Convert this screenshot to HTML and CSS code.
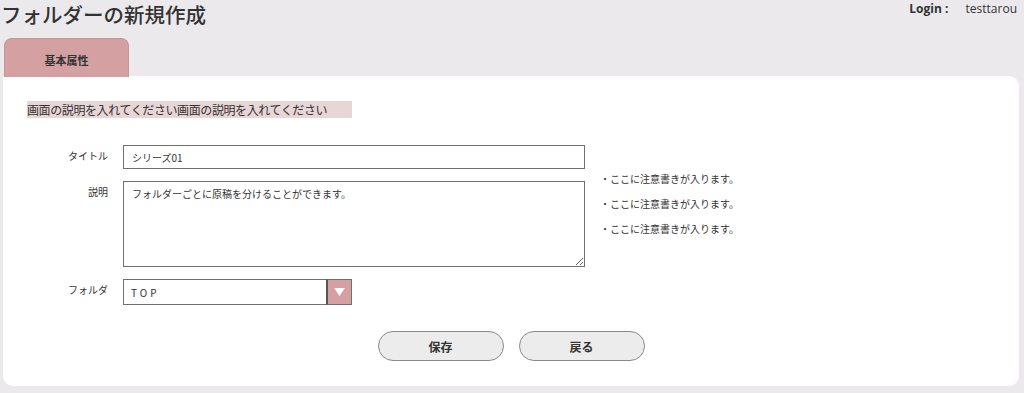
FILE: index.html
```html
<!DOCTYPE html>
<html lang="ja">
<head>
    <meta charset="UTF-8">
    <meta name="viewport" content="width=device-width, initial-scale=1.0">
    <title>フォルダーの新規作成</title>
    <link rel="stylesheet" href="styles.css">
</head>
<body>
    <div class="page-header">
        <h1 class="page-title">フォルダーの新規作成</h1>
        <div class="login-info">
            <span class="login-label">Login :</span>
            <span class="login-user">testtarou</span>
        </div>
    </div>
    <div class="tabs">
        <div class="tab active">基本属性</div>
    </div>
    <div class="panel">
        <p class="page-desc">画面の説明を入れてください画面の説明を入れてください</p>
        <div class="form-grid">
            <label class="form-label" for="title">タイトル</label>
            <input class="form-input" id="title" type="text" value="シリーズ01">
            <div></div>

            <label class="form-label" for="desc">説明</label>
            <textarea class="form-textarea" id="desc">フォルダーごとに原稿を分けることができます。</textarea>
            <ul class="notes">
                <li>・ここに注意書きが入ります。</li>
                <li>・ここに注意書きが入ります。</li>
                <li>・ここに注意書きが入ります。</li>
            </ul>

            <label class="form-label" for="folder">フォルダ</label>
            <div class="select-wrap">
                <select class="form-select" id="folder">
                    <option>TOP</option>
                </select>
                <span class="select-arrow">
                    <svg viewBox="0 0 12 10"><path d="M0 0h12L6 9z" fill="#fff"/></svg>
                </span>
            </div>
            <div></div>
        </div>
        <div class="actions">
            <button class="btn" type="button">保存</button>
            <button class="btn" type="button">戻る</button>
        </div>
    </div>
</body>
</html>
```

FILE: styles.css
```css
* { margin: 0; padding: 0; box-sizing: border-box; }
body {
    font-family: "Noto Sans CJK JP", "Noto Sans", sans-serif;
    background: #ebe9ec;
    color: #333;
    height: 393px;
    overflow: hidden;
}
.page-header {
    display: flex;
    justify-content: space-between;
    align-items: flex-start;
    height: 38px;
}
.page-title {
    font-size: 20.5px;
    font-weight: 500;
    line-height: 28px;
    color: #333;
    padding-left: 1px;
}
.login-info {
    font-family: "Open Sans", "Noto Sans CJK JP", sans-serif;
    font-size: 12px;
    line-height: 18px;
    padding: 0 7px 0 0;
    color: #333;
}
.login-label { font-weight: 700; margin-right: 14px; }
.tabs { display: flex; padding-left: 4px; height: 38px; }
.tab {
    width: 125px;
    height: 39px;
    background: #d4a0a2;
    border: 1px solid #c69597;
    border-bottom: none;
    border-radius: 8px 8px 0 0;
    font-size: 11px;
    font-weight: 700;
    display: flex;
    align-items: center;
    justify-content: center;
    padding-top: 4px;
    color: #333;
}
.panel {
    background: #fff;
    margin: 0 5px 0 3px;
    height: 310px;
    border-radius: 0 10px 10px 10px;
    padding: 25px 0 0 0;
}
.page-desc {
    margin-left: 24px;
    width: 325px;
    height: 17px;
    background: #e8d5d6;
    font-size: 12px;
    line-height: 17px;
    letter-spacing: -0.4px;
    color: #333;
}
.form-grid {
    display: grid;
    grid-template-columns: 105px 462px 1fr;
    column-gap: 15px;
    row-gap: 12px;
    margin-top: 27px;
    align-items: start;
}
.form-label {
    text-align: right;
    font-size: 10px;
    line-height: 14px;
    padding-top: 4px;
    color: #333;
}
.form-input, .form-textarea, .form-select {
    font-family: "Noto Sans CJK JP", "Noto Sans", sans-serif;
    font-size: 10px;
    color: #333;
    border: 1px solid #707070;
    background: #fff;
    outline: none;
    width: 100%;
    display: block;
}
.form-input { height: 24px; padding: 0 8px; }
.form-textarea { height: 86px; padding: 4px 8px; resize: vertical; line-height: 16px; }
.notes {
    list-style: none;
    font-size: 10px;
    line-height: 16px;
    margin-top: -10px;
    display: flex;
    flex-direction: column;
    gap: 9px;
    color: #333;
}
.select-wrap { position: relative; width: 229px; height: 26px; }
.form-select {
    appearance: none;
    height: 26px;
    padding: 0 7px;
    letter-spacing: 3px;
}
.select-arrow {
    position: absolute;
    top: 0;
    right: 0;
    width: 26px;
    height: 26px;
    background: #d4a0a2;
    border: 1px solid #707070;
    border-left: 2px solid #555;
    display: flex;
    align-items: center;
    justify-content: center;
    pointer-events: none;
}
.select-arrow svg { width: 11px; height: 9px; }
.actions {
    display: flex;
    justify-content: center;
    gap: 15px;
    margin-top: 26px;
}
.btn {
    width: 126px;
    height: 30px;
    border-radius: 15px;
    border: 1px solid #8a8a8a;
    background: #ececec;
    font-family: "Noto Sans CJK JP", sans-serif;
    font-size: 12px;
    font-weight: 700;
    color: #333;
    cursor: pointer;
}
```
